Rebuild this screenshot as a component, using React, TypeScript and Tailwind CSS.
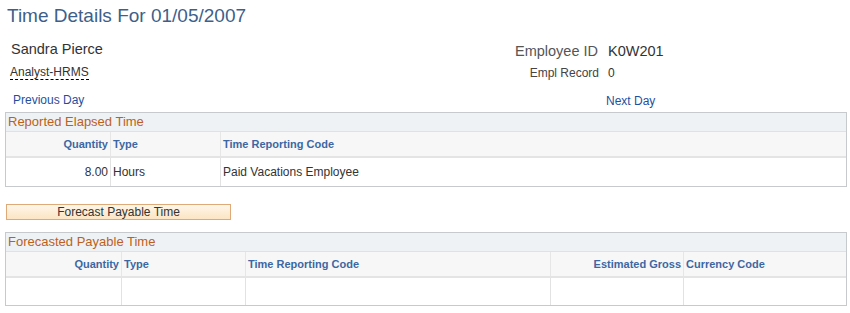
import React from "react"

const labelCls = "text-[11px] font-bold text-[#3d67a3] leading-[13px]"

interface Col {
    label: string
    width: string
    right?: boolean
}

const GridBox = ({ title, cols, row, rowHeight }: { title: string, cols: Col[], row?: string[], rowHeight: string }) => {
    return (
        <div className="ml-[5px] w-[842px] border border-[#c6cacd] bg-white">
            {/* title bar */}
            <div className="h-[19px] border-b border-[#dde2e5] bg-[#eff2f4] pl-[2px] text-[13px] leading-[18px] text-[#bd601c]">
                {title}
            </div>
            {/* header */}
            <div className="flex h-[26px] border-b-2 border-[#e4e4e4] bg-[#f7f7f7]">
                {cols.map((c, i) => (
                    <div
                        key={c.label}
                        className={`${c.width} flex items-center px-[2px] ${i < cols.length - 1 ? "border-r border-[#e6e6e6]" : ""} ${c.right ? "justify-end" : ""}`}>
                        <span className={labelCls}>{c.label}</span>
                    </div>
                ))}
            </div>
            {/* data row */}
            <div className={`flex ${rowHeight}`}>
                {cols.map((c, i) => (
                    <div
                        key={c.label}
                        className={`${c.width} flex items-center px-[2px] text-[12px] text-[#333] ${i < cols.length - 1 ? "border-r border-[#e2e2e2]" : ""} ${c.right ? "justify-end" : ""}`}>
                        {row ? row[i] : ""}
                    </div>
                ))}
            </div>
        </div>
    )
}

export default function App() {
    return (
        <div className="w-[850px] h-[313px] bg-white font-['Liberation_Sans',Arial,sans-serif] overflow-hidden">
            <h1 className="pt-[5px] pl-[7px] text-[19px] leading-[22px] text-[#3e5f8a]">
                Time Details For 01/05/2007
            </h1>

            {/* employee info */}
            <div className="flex mt-[14px] h-[71px]">
                <div className="w-[500px]">
                    <div className="pl-[11px] text-[14.5px] leading-[16px] text-[#333]">Sandra Pierce</div>
                    <div className="flex pl-[10px] mt-[8px]">
                        <span className="text-[12px] leading-[14px] text-[#333] border-b border-dashed border-black">
                            Analyst-HRMS
                        </span>
                    </div>
                    <div className="pl-[13px] mt-[13px] text-[12px] leading-[14px] text-[#1f4f9f]">Previous Day</div>
                </div>
                <div className="flex-1">
                    <div className="flex pt-[2px] text-[14.5px] leading-[16px]">
                        <span className="w-[98px] text-right text-[#555]">Employee ID</span>
                        <span className="ml-[10px] text-[#333]">K0W201</span>
                    </div>
                    <div className="flex mt-[7px] text-[12px] leading-[14px]">
                        <span className="w-[99px] text-right text-[#444]">Empl Record</span>
                        <span className="ml-[9px] text-[#333]">0</span>
                    </div>
                    <div className="ml-[106px] mt-[14px] text-[12px] leading-[14px] text-[#1f4f9f]">Next Day</div>
                </div>
            </div>

            <GridBox
                title="Reported Elapsed Time"
                rowHeight="h-[28px]"
                cols={[
                    { label: "Quantity", width: "w-[105px]", right: true },
                    { label: "Type", width: "w-[110px]" },
                    { label: "Time Reporting Code", width: "flex-1" },
                ]}
                row={["8.00", "Hours", "Paid Vacations Employee"]}
            />

            <button className="ml-[6px] mt-[17px] block w-[225px] h-[16px] border border-[#dfaa78] bg-gradient-to-b from-[#fef6e9] to-[#fce5c3] text-[12px] leading-[14px] text-[#333]">
                Forecast Payable Time
            </button>

            <div className="mt-[12px]">
                <GridBox
                    title="Forecasted Payable Time"
                    rowHeight="h-[27px]"
                    cols={[
                        { label: "Quantity", width: "w-[116px]", right: true },
                        { label: "Type", width: "w-[124px]" },
                        { label: "Time Reporting Code", width: "w-[305px]" },
                        { label: "Estimated Gross", width: "w-[133px]", right: true },
                        { label: "Currency Code", width: "flex-1" },
                    ]}
                />
            </div>
        </div>
    )
}
